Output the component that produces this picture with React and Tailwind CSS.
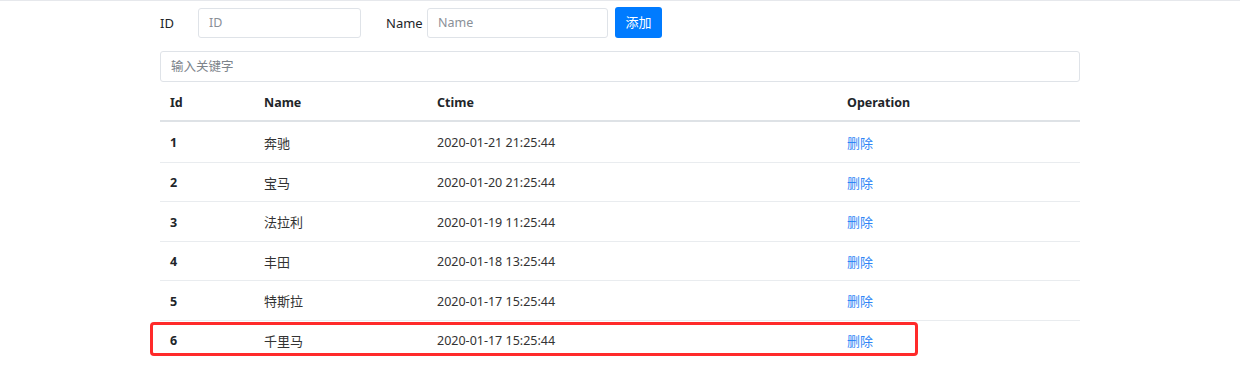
import React from "react";

const rows = [
  { id: 1, name: "奔驰", ctime: "2020-01-21 21:25:44" },
  { id: 2, name: "宝马", ctime: "2020-01-20 21:25:44" },
  { id: 3, name: "法拉利", ctime: "2020-01-19 11:25:44" },
  { id: 4, name: "丰田", ctime: "2020-01-18 13:25:44" },
  { id: 5, name: "特斯拉", ctime: "2020-01-17 15:25:44" },
  { id: 6, name: "千里马", ctime: "2020-01-17 15:25:44" },
];

const font = { fontFamily: '"Noto Sans", "Noto Sans CJK SC", sans-serif' };

export default function App() {
  return (
    <div className="w-[1240px] h-[372px] bg-white border-t border-[#e6e8ec] text-[#212529] text-[12.5px]" style={font}>
      <div className="w-[920px] ml-[160px]">
        {/* add form */}
        <div className="flex items-center h-[31px] mt-[6px]">
          <label className="w-[38px] text-[13px] pt-[2px]">ID</label>
          <input placeholder="ID" className="w-[163px] h-[30px] border border-[#dfe3e8] rounded-[3px] px-[10px] placeholder-[#8a9097] outline-none" />
          <label className="ml-[25px] w-[41px] text-[13px] pt-[2px]">Name</label>
          <input placeholder="Name" className="w-[181px] h-[30px] border border-[#dfe3e8] rounded-[3px] px-[10px] placeholder-[#8a9097] outline-none" />
          <button className="ml-[7px] w-[47px] h-[31px] bg-[#007bff] text-white rounded-[3px] text-[13px]">添加</button>
        </div>
        {/* search */}
        <input placeholder="输入关键字" className="mt-[13px] w-full h-[31px] border border-[#dfe3e8] rounded-[3px] px-[10px] placeholder-[#7d848b] outline-none" />
        {/* table */}
        <div className="relative">
          <div className="grid grid-cols-[94px_173px_410px_243px] h-[40px] pt-[4px] items-center border-b-2 border-[#dee2e6] font-bold">
            <div className="pl-[10px]">Id</div>
            <div className="pl-[10px]">Name</div>
            <div className="pl-[10px]">Ctime</div>
            <div className="pl-[10px]">Operation</div>
          </div>
          {rows.map((r, i) => (
            <div key={r.id} className={"grid grid-cols-[94px_173px_410px_243px] h-[39.5px] pt-[3px] items-center leading-[18px] text-[#333] " + (i > 0 ? "border-t border-[#e9ecef]" : "")}>
              <div className="pl-[10px] font-bold text-[#212529]">{r.id}</div>
              <div className="pl-[10px] text-[13px] mt-[-1px]">{r.name}</div>
              <div className="pl-[10px]">{r.ctime}</div>
              <div className="pl-[10px] text-[13px] mt-[-1px]"><a href="#" className="text-[#2f86f6]">删除</a></div>
            </div>
          ))}
          <div className="absolute left-[-10px] top-[240px] w-[768px] h-[34px] border-[3px] border-[#ff2a2a] rounded-[4px]" />
        </div>
      </div>
    </div>
  );
}
